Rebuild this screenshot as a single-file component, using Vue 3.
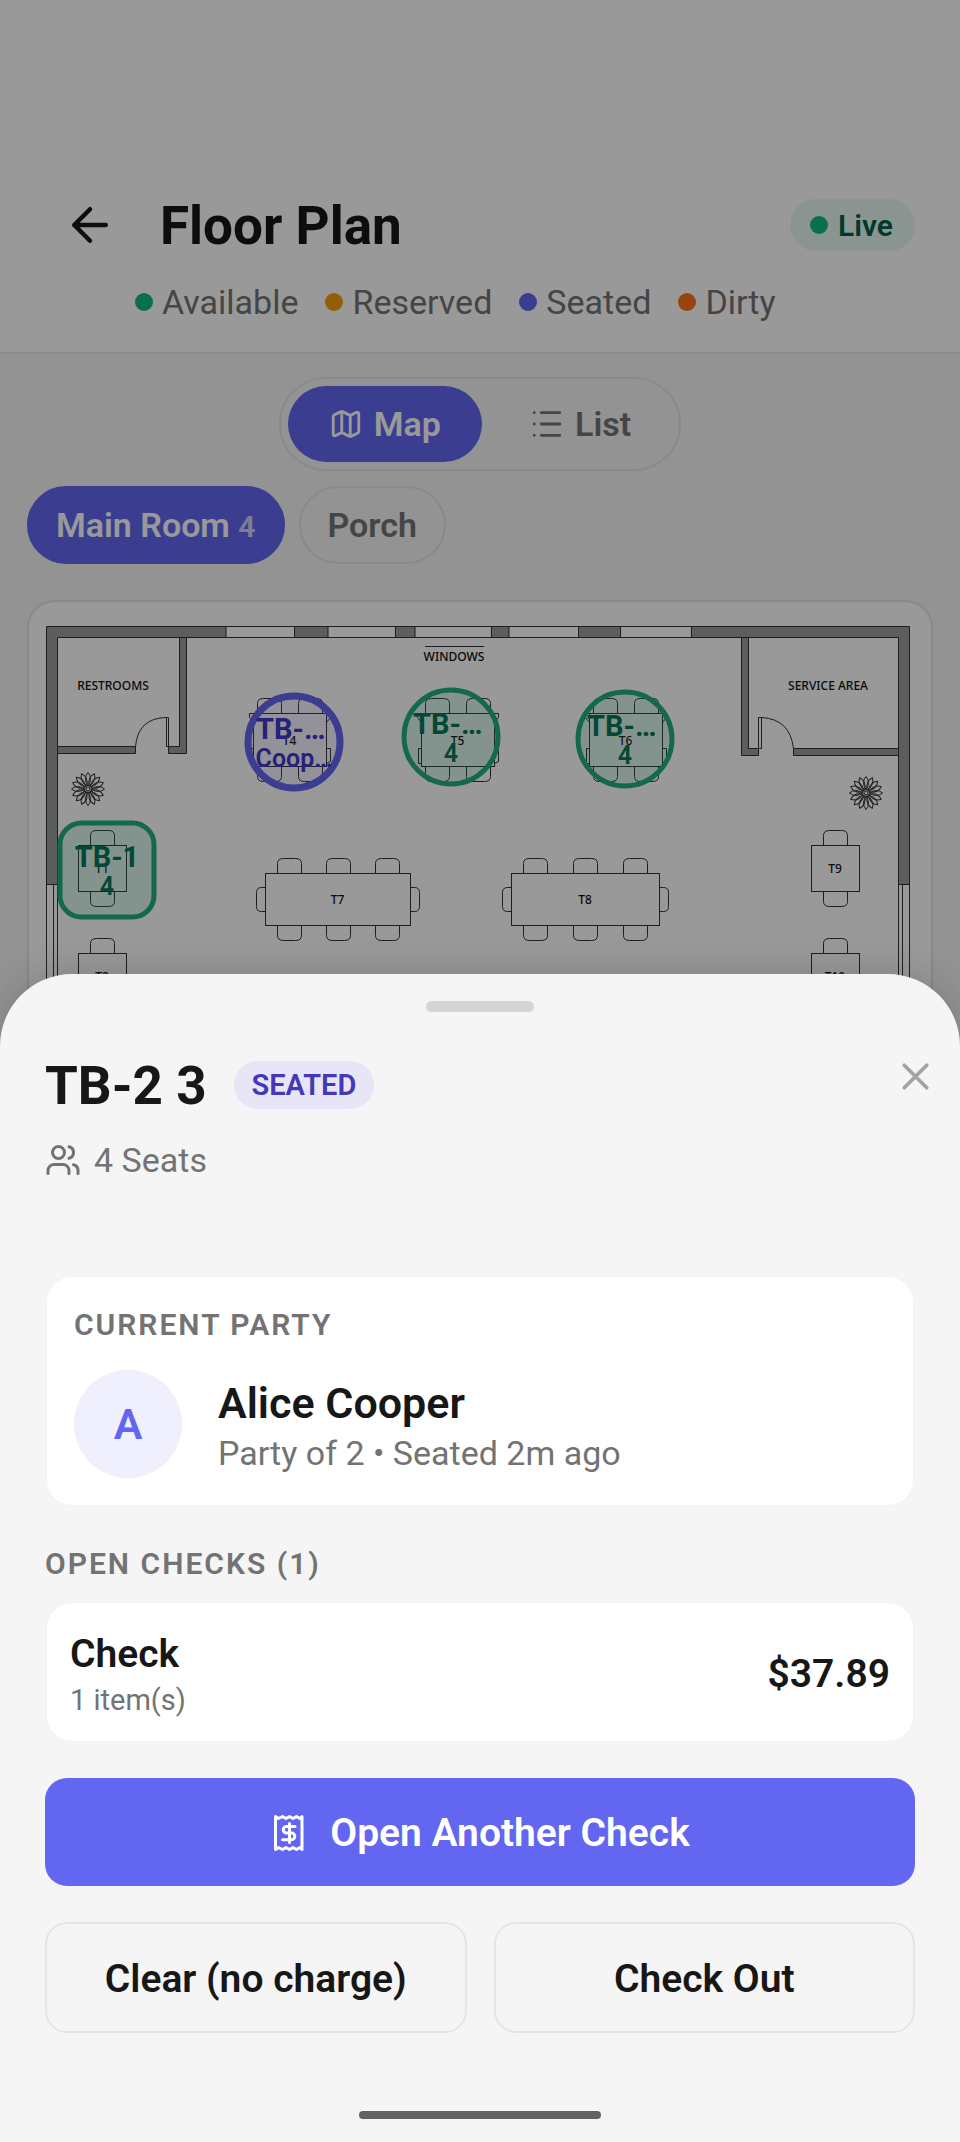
<script setup>
const legend = [
  { label: 'Available', tone: 'green' },
  { label: 'Reserved', tone: 'amber' },
  { label: 'Seated', tone: 'indigo' },
  { label: 'Dirty', tone: 'orange' }
]

// Chair outlines: open on the side that touches the table.
const chairUp = (x, y) => `M${x} ${y}v-10q0 -5 6 -5h12q6 0 6 5v10`
const chairDown = (x, y) => `M${x} ${y}v10q0 5 6 5h12q6 0 6 -5v-10`
const chairLeft = (x, y) => `M${x} ${y}h-4q-5 0 -5 5v14q0 5 5 5h4`
const chairRight = (x, y) => `M${x} ${y}h4q5 0 5 5v14q0 5 -5 5h-4`

const small = (x, y, label) => ({
  x, y, w: 48, h: 46, label,
  chairs: [chairUp(x + 12, y), chairDown(x + 12, y + 46)]
})
const square = (x, label) => ({
  x, y: 714, w: 73, h: 53, label,
  chairs: [
    chairUp(x + 4, 714), chairUp(x + 45, 714),
    chairDown(x + 4, 767), chairDown(x + 45, 767),
    `M${x} 749h-3v15h3`, `M${x + 73} 749h4v13l-4 2`,
    `M${x} 714h-4v4l4 5`, `M${x + 73} 714h4v4l-4 5`
  ]
})
const long = (x, w, step, label) => ({
  x, y: 874, w, h: 52, label,
  chairs: [
    ...[0, 1, 2].flatMap((i) => [chairUp(x + 12 + i * step, 874), chairDown(x + 12 + i * step, 926)]),
    chairLeft(x, 888), chairRight(x + w, 888)
  ]
})

const tables = [
  square(253, 'T4'), square(421, 'T5'), square(589, 'T6'),
  long(265, 145, 49, 'T7'), long(511, 148, 50, 'T8'),
  small(78, 846, 'T1'), small(811, 846, 'T9'),
  small(78, 954, 'T2'), small(811, 954, 'T10')
]

const petals = Array.from({ length: 16 }, (_, i) => i * 22.5)
const plants = [{ x: 88, y: 789 }, { x: 866, y: 793 }]

// Marker centres on the plan, in plan units.
const plan = { x: 29, y: 602, w: 902, h: 481 }
const markers = [
  { id: 'a', name: 'TB-…', sub: 'Coop…', x: 294, y: 742, kind: 'seated round clipped' },
  { id: 'b', name: 'TB-…', sub: '4', x: 451, y: 737, kind: 'free round clipped' },
  { id: 'c', name: 'TB-…', sub: '4', x: 625, y: 739, kind: 'free round clipped' },
  { id: 'd', name: 'TB-1', sub: '4', x: 107, y: 870, kind: 'free' }
]
const place = (m) => ({
  left: ((m.x - plan.x) / plan.w) * 100 + '%',
  top: ((m.y - plan.y) / plan.h) * 100 + '%'
})
</script>

<template>
  <div class="app">
    <div class="screen">
      <header class="header">
        <div class="title-row">
          <button class="back" type="button" aria-label="Back">
            <svg viewBox="0 0 24 24" class="icon"><path d="M12 19l-7-7 7-7M19 12H5" /></svg>
          </button>
          <h1>Floor Plan</h1>
          <span class="live"><i class="dot green"></i>Live</span>
        </div>
        <ul class="legend">
          <li v-for="l in legend" :key="l.label"><i class="dot" :class="l.tone"></i>{{ l.label }}</li>
        </ul>
      </header>

      <main class="body">
        <div class="toggle">
          <button type="button" class="seg active">
            <svg viewBox="0 0 24 24" class="icon"><path d="M14.1 5.55a2 2 0 0 0 1.8 0l3.65-1.83A1 1 0 0 1 21 4.62v12.76a1 1 0 0 1-.55.9l-4.55 2.27a2 2 0 0 1-1.8 0l-4.2-2.1a2 2 0 0 0-1.8 0l-3.65 1.83A1 1 0 0 1 3 19.38V6.62a1 1 0 0 1 .55-.9L8.1 3.45a2 2 0 0 1 1.8 0zM15 5.76v15M9 3.24v15" /></svg>
            Map
          </button>
          <button type="button" class="seg">
            <svg viewBox="0 0 24 24" class="icon"><path d="M8 4h13M8 12h13M8 20h13M3 4h.01M3 12h.01M3 20h.01" /></svg>
            List
          </button>
        </div>

        <nav class="rooms">
          <button type="button" class="room active">Main Room <span>4</span></button>
          <button type="button" class="room">Porch</button>
        </nav>

        <section class="map">
          <svg class="plan" :viewBox="`${plan.x} ${plan.y} ${plan.w} ${plan.h}`">
            <g class="wall">
              <path d="M46.500 626.500H226V637.500H57.500V884.500H46.500Z" />
              <path d="M294.500 626.500H328V637.500H294.500ZM395.500 626.500H415V637.500H395.500ZM491.500 626.500H509V637.500H491.500ZM578.500 626.500H620.500V637.500H578.500Z" />
              <path d="M691.500 626.500H909.500V884.500H898.500V637.500H691.500Z" />
              <path d="M57.500 746.500H135.500V753.500H57.500Z" />
              <path d="M179.500 637.500H186.500V753.500H168.500V746.500H179.500Z" />
              <path d="M741.500 637.500H748.500V748.500H758.500V755.500H741.500Z" />
              <path d="M793.500 748.500H898.500V755.500H793.500Z" />
            </g>
            <g class="line">
              <path d="M226 626.500H692M187 637.500H741" />
              <path d="M46.500 884V1083M53.500 884V1083M57.500 884V1083M898.500 884V1083M902.500 884V1083M909.500 884V1083" />
              <path d="M135.500 746.500Q138 718 166.500 717.500H168.500V746.500H166.500V717.500" />
              <path d="M793.500 748.500Q790 719 761.500 717.500H758.500V748.500H761.500V717.500" />
              <path d="M425 646.500H484" />
              <g v-for="t in tables" :key="t.label" transform="translate(0.5 -0.5)">
                <rect :x="t.x" :y="t.y" :width="t.w" :height="t.h" />
                <path v-for="(c, i) in t.chairs" :key="i" :d="c" />
              </g>
              <g v-for="p in plants" :key="p.x" :transform="`translate(${p.x} ${p.y})`">
                <path v-for="a in petals" :key="a" :transform="`rotate(${a})`" d="M0 -3Q-5 -11 0 -16.500Q5 -11 0 -3" />
                <circle r="2" />
              </g>
            </g>
            <g class="label">
              <text x="113" y="690">RESTROOMS</text>
              <text x="454" y="661">WINDOWS</text>
              <text x="828" y="690">SERVICE AREA</text>
              <text v-for="t in tables" :key="t.label" :x="t.x + t.w / 2" :y="t.y + t.h / 2 + 4">{{ t.label }}</text>
            </g>
          </svg>
          <button v-for="m in markers" :key="m.id" type="button" class="marker" :class="m.kind" :style="place(m)">
            <span class="m-name">{{ m.name }}</span>
            <span class="m-sub">{{ m.sub }}</span>
          </button>
        </section>
      </main>
    </div>

    <div class="scrim"></div>

    <section class="sheet" role="dialog" aria-labelledby="sheet-title">
      <div class="handle"></div>
      <div class="sheet-head">
        <h2 id="sheet-title">TB-2 3</h2>
        <span class="status">SEATED</span>
        <button type="button" class="close" aria-label="Close">
          <svg viewBox="0 0 24 24" class="icon"><path d="M18 6L6 18M6 6l12 12" /></svg>
        </button>
      </div>
      <p class="seats">
        <svg viewBox="0 0 24 24" class="icon"><path d="M16 21v-2a4 4 0 0 0-4-4H6a4 4 0 0 0-4 4v2M22 21v-2a4 4 0 0 0-3-3.87M16 3.13a4 4 0 0 1 0 7.75" /><circle cx="9" cy="7" r="4" /></svg>
        4 Seats
      </p>

      <article class="card party">
        <h3>CURRENT PARTY</h3>
        <div class="guest">
          <span class="avatar">A</span>
          <div class="guest-text">
            <p class="name">Alice Cooper</p>
            <p class="meta">Party of 2 • Seated 2m ago</p>
          </div>
        </div>
      </article>

      <h3 class="checks-title">OPEN CHECKS (1)</h3>
      <article class="card check">
        <div>
          <p class="check-name">Check</p>
          <p class="check-items">1 item(s)</p>
        </div>
        <span class="price">$37.89</span>
      </article>

      <button type="button" class="primary">
        <svg viewBox="-1 0 36 40" class="receipt">
          <path d="M4.500 3.500l3 2 4-2 3.500 2 3.500-2 3.500 2 3.500-2 3.500 2 2-2v33l-2-2-3.500 2-3.500-2-3.500 2-3.500-2-3.500 2-4-2-3 2Z" />
          <path d="M24 13.500h-8.500a3.300 3.300 0 0 0 0 6.600h5a3.300 3.300 0 0 1 0 6.600H11.500M18.500 10.500v19" />
        </svg>
        Open Another Check
      </button>
      <div class="actions">
        <button type="button">Clear (no charge)</button>
        <button type="button">Check Out</button>
      </div>
      <div class="home-bar"></div>
    </section>
  </div>
</template>

<style>
body { margin: 0; }
</style>

<style scoped>
* { box-sizing: border-box; }
h1, h2, h3, p, ul { margin: 0; padding: 0; }
ul { list-style: none; }
button {
  margin: 0;
  padding: 0;
  border: 0;
  background: none;
  color: inherit;
  font: inherit;
  cursor: pointer;
}
.app {
  display: grid;
  grid-template-columns: minmax(0, 1fr);
  min-height: 100vh;
  overflow: hidden;
  font-family: Roboto, "Liberation Sans", sans-serif;
  color: #171717;
}
.screen, .scrim, .sheet { grid-area: 1 / 1; }
.screen { background: #f5f5f5; }
.scrim { background: rgba(0, 0, 0, 0.4); z-index: 1; }
.icon {
  display: block;
  flex: none;
  width: 36px;
  height: 36px;
  fill: none;
  stroke: currentColor;
  stroke-width: 2;
  stroke-linecap: round;
  stroke-linejoin: round;
}

.header {
  padding: 189px 45px 30px;
  background: #fff;
  border-bottom: 2px solid #e5e5e5;
}
.title-row { display: flex; align-items: center; height: 72px; }
.back { margin-left: 18px; }
.back .icon { width: 54px; height: 54px; }
h1 { margin-left: 43px; padding-top: 2px; font-size: 53px; line-height: 62px; font-weight: 700; }
.live {
  display: flex;
  align-items: center;
  gap: 10px;
  height: 52px;
  margin-left: auto;
  padding: 0 22px 0 20px;
  border-radius: 26px;
  background: #e7f8f2;
  color: #065f46;
  font-size: 30px;
  font-weight: 600;
}
.dot { flex: none; width: 18px; height: 18px; border-radius: 50%; }
.green { background: #10b981; }
.amber { background: #f59e0b; }
.indigo { background: #6366f1; }
.orange { background: #f97316; }
.legend {
  display: flex;
  gap: 27px;
  margin-top: 21px;
  padding-left: 90px;
  color: #737373;
  font-size: 34px;
  line-height: 40px;
}
.legend li { display: flex; align-items: center; gap: 9px; }

.body { padding: 23px 27px 0; }
.toggle {
  display: flex;
  gap: 7px;
  width: fit-content;
  margin: 0 auto;
  padding: 7px;
  border: 2px solid #e5e5e5;
  border-radius: 48px;
  color: #737373;
}
.seg {
  display: flex;
  align-items: center;
  gap: 11px;
  height: 76px;
  padding: 0 41px;
  border-radius: 38px;
  font-size: 34px;
  font-weight: 600;
}
.seg .icon { width: 34px; height: 34px; }
.active { background: #6366f1; color: #fff; }
.rooms { display: flex; gap: 14px; margin-top: 15px; }
.room {
  height: 78px;
  padding: 0 27px;
  border: 2px solid #e5e5e5;
  border-radius: 39px;
  color: #737373;
  font-size: 34px;
  font-weight: 600;
}
.room.active { border-color: #6366f1; color: #fff; }
.room span { font-size: 30px; opacity: 0.7; }

.map {
  position: relative;
  margin-top: 36px;
  border: 2px solid #e5e5e5;
  border-radius: 28px;
  background: #fff;
}
.plan { display: block; width: 100%; }
.wall { fill: #9a9b9d; stroke: #333; stroke-width: 1; }
.line { fill: none; stroke: #333; stroke-width: 1; }
.label {
  fill: #111;
  font: 500 12px "Noto Sans", Roboto, sans-serif;
  text-anchor: middle;
}
.marker {
  position: absolute;
  display: flex;
  flex-direction: column;
  align-items: center;
  justify-content: center;
  width: 99px;
  height: 99px;
  transform: translate(-50%, -50%);
  border: 5px solid;
  border-radius: 24px;
}
.marker.round { border-radius: 50%; }
.free { border-color: #22b07f; background: rgba(16, 185, 129, 0.14); color: #047857; }
.seated { border: 7px solid #6366f1; background: rgba(99, 102, 241, 0.08); color: #4338ca; }
.m-name { font-size: 29px; line-height: 32px; font-weight: 700; }
.m-sub { font-size: 25px; line-height: 28px; font-weight: 600; }
.clipped .m-name { width: 76px; text-align: left; }

.sheet {
  z-index: 2;
  align-self: end;
  padding: 27px 45px 23px;
  border-radius: 72px 72px 0 0;
  background: #f5f5f5;
  box-shadow: 0 -4px 36px rgba(0, 0, 0, 0.14);
}
.handle {
  width: 108px;
  height: 11px;
  margin: 0 auto 42px;
  border-radius: 6px;
  background: #d4d4d4;
}
.sheet-head { display: flex; align-items: center; }
h2 { padding-top: 2px; font-size: 53px; line-height: 60px; font-weight: 700; }
.status {
  margin-left: 27px;
  padding: 0 18px;
  border-radius: 24px;
  background: #e7e5f6;
  color: #4338b5;
  font-size: 29px;
  line-height: 48px;
  font-weight: 600;
}
.close { align-self: flex-start; margin: 0 -23px 0 auto; color: #a3a3a3; }
.close .icon { width: 45px; height: 45px; }
.seats {
  display: flex;
  align-items: center;
  gap: 13px;
  margin-top: 24px;
  color: #737373;
  font-size: 34px;
  line-height: 40px;
}
.card {
  border: 2px solid #f4f4f4;
  border-radius: 27px;
  background: #fff;
}
h3 {
  color: #737373;
  font-size: 30px;
  line-height: 34px;
  font-weight: 600;
  letter-spacing: 2px;
}
.party { margin-top: 95px; padding: 31px 27px 27px; }
.guest { display: flex; align-items: center; gap: 36px; margin-top: 28px; }
.guest-text { padding-top: 4px; }
.avatar {
  display: grid;
  place-items: center;
  flex: none;
  width: 108px;
  height: 108px;
  border-radius: 50%;
  background: #efeffd;
  color: #6366f1;
  font-size: 43px;
  font-weight: 600;
}
.name { font-size: 43px; line-height: 48px; font-weight: 600; }
.meta { margin-top: 6px; color: #737373; font-size: 34px; line-height: 40px; }
.checks-title { margin-top: 40px; }
.check {
  display: flex;
  align-items: center;
  justify-content: space-between;
  margin-top: 20px;
  padding: 28px 23px 24px;
}
.check-name { font-size: 39px; line-height: 46px; font-weight: 600; }
.check-items { margin-top: 6px; color: #737373; font-size: 29px; line-height: 34px; }
.price { font-size: 39px; font-weight: 600; }
.primary {
  display: flex;
  align-items: center;
  justify-content: center;
  gap: 24px;
  width: 100%;
  height: 108px;
  margin-top: 35px;
  padding-top: 2px;
  border-radius: 22px;
  background: #6366f1;
  color: #fff;
  font-size: 39px;
  font-weight: 600;
}
.receipt {
  width: 36px;
  height: 40px;
  fill: none;
  stroke: currentColor;
  stroke-width: 3;
  stroke-linejoin: round;
  stroke-linecap: round;
}
.actions { display: grid; grid-template-columns: 1fr 1fr; gap: 27px; margin-top: 36px; }
.actions button {
  height: 111px;
  padding-top: 2px;
  border: 2px solid #e5e5e5;
  border-radius: 22px;
  font-size: 39px;
  font-weight: 600;
}
.home-bar {
  width: 242px;
  height: 8px;
  margin: 78px auto 0;
  border-radius: 4px;
  background: #636363;
}
</style>
